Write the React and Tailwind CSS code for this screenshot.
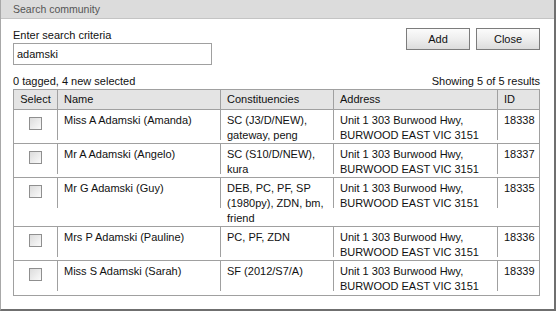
import React from "react";

const rows = [
  { name: "Miss A Adamski (Amanda)", cons: ["SC (J3/D/NEW),", "gateway, peng"], id: "18338", h: "h-[34px]" },
  { name: "Mr A Adamski (Angelo)", cons: ["SC (S10/D/NEW),", "kura"], id: "18337", h: "h-[34px]" },
  { name: "Mr G Adamski (Guy)", cons: ["DEB, PC, PF, SP", "(1980py), ZDN, bm,", "friend"], id: "18335", h: "h-[49px]" },
  { name: "Mrs P Adamski (Pauline)", cons: ["PC, PF, ZDN"], id: "18336", h: "h-[34px]" },
  { name: "Miss S Adamski (Sarah)", cons: ["SF (2012/S7/A)"], id: "18339", h: "h-[34px]" },
];

function Cell({ sep = true, children, className = "" }) {
  return (
    <div className="flex items-start">
      {sep && <span className="w-px h-[30px] bg-[#a0a0a0] shrink-0" />}
      <div className={"pt-[3px] leading-[15px] " + className}>{children}</div>
    </div>
  );
}

function Checkbox() {
  return (
    <span className="block w-[13px] h-[13px] border border-[#8f8f8f] bg-gradient-to-br from-[#dcdcdc] to-[#fafafa]" />
  );
}

function App() {
  return (
    <div className="w-[558px] h-[311px] bg-white text-[11px] text-[#111] font-['Liberation_Sans',Arial,sans-serif]">
      <div className="w-[556px] h-[311px] flex flex-col border-l border-[#a8a8a8] border-r-2 border-r-[#6f6f6f] border-b-2 border-b-[#6f6f6f]">
        <div className="h-[19px] bg-[#dcdcdc] border-b border-[#c4c4c4] pl-[12px] leading-[18px] text-[#555] text-[10.5px]">
          Search community
        </div>
        <div className="px-[12px] flex flex-col">
          <div className="flex justify-between">
            <div className="pt-[9px]">
              <div className="leading-[15px]">Enter search criteria</div>
              <div className="w-[199px] h-[22px] border border-[#a0a0a0] px-[3px] leading-[20px]">adamski</div>
            </div>
            <div className="flex gap-[6px] pt-[9px] pr-[2px]">
              <button className="w-[64px] h-[22px] border border-[#7c7c7c] bg-gradient-to-b from-[#fbfbfb] via-[#eeeeee] to-[#dcdcdc] leading-[20px]">Add</button>
              <button className="w-[64px] h-[22px] border border-[#7c7c7c] bg-gradient-to-b from-[#fbfbfb] via-[#eeeeee] to-[#dcdcdc] leading-[20px]">Close</button>
            </div>
          </div>
          <div className="flex justify-between w-[527px] mt-[9px] leading-[15px]">
            <span>0 tagged, 4 new selected</span>
            <span>Showing 5 of 5 results</span>
          </div>
          <div className="w-[527px] border border-[#a0a0a0]">
            <div className="grid grid-cols-[43px_163px_113px_164px_1fr] h-[20px] bg-[#e4e4e4] border-b border-[#a0a0a0] leading-[19px]">
              <div className="text-center">Select</div>
              <div className="border-l border-[#a0a0a0] pl-[6px]">Name</div>
              <div className="border-l border-[#a0a0a0] pl-[6px]">Constituencies</div>
              <div className="border-l border-[#a0a0a0] pl-[6px]">Address</div>
              <div className="border-l border-[#a0a0a0] pl-[6px]">ID</div>
            </div>
            {rows.map((r, i) => (
              <div
                key={r.id}
                className={
                  "grid grid-cols-[43px_163px_113px_164px_1fr] " +
                  r.h +
                  (i < rows.length - 1 ? " border-b border-[#a0a0a0]" : "")
                }
              >
                <div className="flex justify-center pt-[7px]">
                  <Checkbox />
                </div>
                <Cell className="pl-[6px]">{r.name}</Cell>
                <Cell className="pl-[6px]">
                  {r.cons.map((c) => (
                    <div key={c}>{c}</div>
                  ))}
                </Cell>
                <Cell className="pl-[6px]">
                  <div>Unit 1 303 Burwood Hwy,</div>
                  <div>BURWOOD EAST VIC 3151</div>
                </Cell>
                <Cell className="pl-[6px]">{r.id}</Cell>
              </div>
            ))}
          </div>
        </div>
      </div>
    </div>
  );
}

export default App;
